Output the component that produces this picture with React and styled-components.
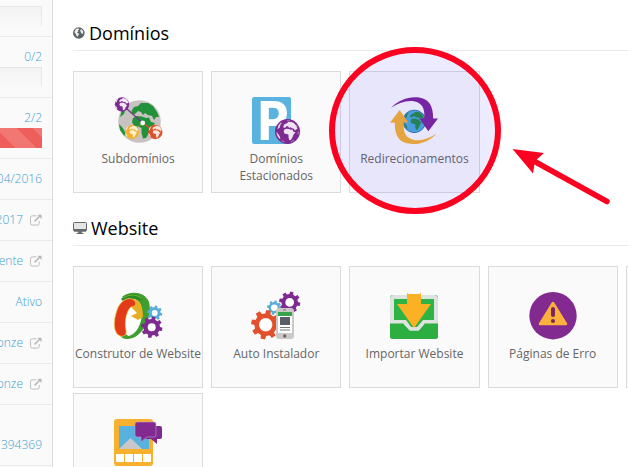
import React from "react";
import styled, { createGlobalStyle, css } from "styled-components";

const GlobalStyle = createGlobalStyle`
  *, *::before, *::after { box-sizing: border-box; }
  body {
    margin: 0;
    background: #fff;
    font-family: "Open Sans", "Noto Sans", sans-serif;
    font-size: 12px;
    line-height: 20px;
    overflow: hidden;
  }
  svg { flex: none; }
`;

const Page = styled.div`
  display: flex;
  height: 100vh;
  overflow: hidden;
`;

const Sidebar = styled.aside`
  flex: none;
  width: 53px;
  background: #fafafa;
  border-right: 1px solid #dcdcdc;
`;

const StatList = styled.ul`
  list-style: none;
  margin: 0;
  padding: 0;
`;

const StatRow = styled.li`
  padding: ${(p) => (p.$first ? "6px" : p.$tall ? "30px" : "10px")} 10px 10px 0;
  border-bottom: 1px solid #eaeaea;
`;

const lineStyle = css`
  display: flex;
  align-items: center;
  justify-content: flex-end;
  gap: 7px;
  height: 20px;
  color: #3f9fd2;
  font-weight: 300;
  white-space: nowrap;
  text-decoration: none;
`;

const StatValue = styled.span`${lineStyle}`;
const StatLink = styled.a`${lineStyle}`;

const Progress = styled.div`
  height: 20px;
  background: linear-gradient(#f3f3f3, #f9f9f9);
  box-shadow: inset -1px 1px 1px rgba(0, 0, 0, 0.06);
`;

const ProgressFill = styled.div`
  height: 100%;
  background: #ee5f5b repeating-linear-gradient(
    45deg,
    transparent 0 11px,
    rgba(255, 255, 255, 0.15) 11px 26px
  );
`;

const Main = styled.main`
  flex: 1 0 auto;
  padding: 21px 20px 0;
`;

const Section = styled.section`
  margin-bottom: 23px;
`;

const Heading = styled.h2`
  display: flex;
  align-items: center;
  gap: 4px;
  margin: 0 0 20px;
  padding-bottom: 5px;
  border-bottom: 1px solid #eaeaea;
  color: #000;
  font-size: 18px;
  font-weight: 400;
  line-height: 24px;
`;

const Grid = styled.div`
  display: grid;
  grid-template-columns: repeat(5, 1fr);
  gap: 5px 8px;
  min-width: 683px;
`;

const Card = styled.a`
  position: relative;
  display: flex;
  flex-direction: column;
  align-items: center;
  gap: 5px;
  min-height: 122px;
  padding-top: 25px;
  background: #fafafa;
  border: 1px solid #dbdbdb;
  color: #666;
  text-decoration: none;
`;

const CardLabel = styled.span`
  max-width: 128px;
  line-height: 17px;
  text-align: center;
`;

const Highlight = styled.svg`
  position: absolute;
  z-index: 1;
  left: -22px;
  top: -26px;
  overflow: visible;
  pointer-events: none;
`;

const IconFrame = styled.svg`
  overflow: visible;
`;

const AppIcon = ({ children }) => (
  <IconFrame width="48" height="48" viewBox="0 0 48 48" aria-hidden="true">{children}</IconFrame>
);

const LAND =
  "M17.5 14 L20 10 L24 9 L27 6 L34 6 L39 9 L43 15 L45 20 L42 20 L40 23 L38 19 L34 18 L31 16 L29 18 L27 15 L24 14 L21 17 L18 17Z" +
  "M19 21 L23 19 L28 19.5 L32 21 L35 20.5 L37 25 L41 26 L37 31 L35 36 L32 41 L29 41.5 L27.5 36 L27.5 31 L24 29.5 L20 29 L18 25Z" +
  "M5 27 L8 30 L10 33 L12 38 L10 38.5 L6 33Z" +
  "M8 13 L12 8 L15 7 L12 11 L10 17 L6 20Z";

const Globe = ({ cx, cy, r, sea, land }) => (
  <g transform={`translate(${cx} ${cy}) scale(${r / 21.3}) translate(-25.5 -24.5)`}>
    <circle cx="25.5" cy="24.5" r="21.3" fill={sea} />
    <path d={LAND} fill={land} />
  </g>
);

const gearPath = (cx, cy, r, hole, teeth, turn) => {
  const root = r * 0.77;
  const step = (Math.PI * 2) / teeth;
  const pts = [];
  for (let i = 0; i < teeth; i++) {
    const a = i * step + turn;
    [[-0.3, root], [-0.2, r], [0.2, r], [0.3, root]].forEach(([f, d]) => {
      pts.push(`${(cx + Math.cos(a + f * step) * d).toFixed(2)} ${(cy + Math.sin(a + f * step) * d).toFixed(2)}`);
    });
  }
  return `M${pts.join("L")}Z M${cx - hole} ${cy}a${hole} ${hole} 0 1 0 ${hole * 2} 0a${hole} ${hole} 0 1 0 ${-hole * 2} 0Z`;
};

const Gear = ({ cx, cy, r, hole, fill, teeth = 8, turn = 0.2 }) => (
  <>
    <circle cx={cx} cy={cy} r={hole + 0.5} fill="#fff" />
    <path d={gearPath(cx, cy, r, hole, teeth, turn)} fill={fill} fillRule="evenodd" />
  </>
);

const SubdomainsIcon = () => (
  <AppIcon>
    <Globe cx={25.5} cy={24.5} r={21.3} sea="#c8c3c1" land="#22923a" />
    <path d="M8 7.5L28.7 26" stroke="#6b3a80" strokeWidth="1.3" />
    <path d="M28.7 26L41 35" stroke="#d8502f" strokeWidth="1.3" />
    <path d="M28.7 26L18 35" stroke="#8b9a35" strokeWidth="1" />
    <Globe cx={8} cy={7.5} r={7.2} sea="#7d2b90" land="#f3e6f5" />
    <Globe cx={18} cy={35} r={7} sea="#f5ae2d" land="#fff0cd" />
    <Globe cx={41.3} cy={35} r={7.2} sea="#df4f2c" land="#ffe3d8" />
    <circle cx="28.7" cy="26" r="2.4" fill="#f4fff4" />
  </AppIcon>
);

const ParkedIcon = () => (
  <AppIcon>
    <rect width="39" height="47" rx="2" fill="#5ab3df" />
    <text x="4" y="43" fontFamily="Open Sans, sans-serif" fontSize="53" fontWeight="700" fill="#fff">P</text>
    <circle cx="35.5" cy="34.5" r="12.5" fill="#7f2a91" />
    <Globe cx={35.5} cy={34.5} r={11} sea="#7f2a91" land="#eee3f0" />
    <circle cx="35.5" cy="34.5" r="10.8" fill="none" stroke="#c9a5d1" strokeWidth=".8" strokeDasharray="3 7" />
  </AppIcon>
);

const SWOOSH =
  "M.8 11C8 3.500 17 0 25 .2C37 .5 43.200 6 43.200 21.400L48 21.400L38.300 34.200L29.600 21.800L34.300 21.600C35 11 32 6 24 4.300C16 3 8 6.500 .8 11Z";

const RedirectIcon = () => (
  <AppIcon>
    <circle cx="24.300" cy="24.300" r="11.600" fill="#2b7194" />
    <Globe cx={24.3} cy={24.3} r={10.8} sea="#4aa9dd" land="#218b45" />
    <path d={SWOOSH} fill="#7c2499" />
    <path d={SWOOSH} fill="#f5b12c" transform="rotate(180 24 23.600)" />
  </AppIcon>
);

const BuilderIcon = () => (
  <AppIcon>
    <path d="M8 5C17 -2 31 0 35 10C39 24 29 46 14 47C9 47 8 46 7 44L18 41C25 31 28 20 24 9Z" fill="#3f9f2e" />
    <path d="M7 7C13 0 24 0 28 7L25 9C21 5 15 5 9 9Z" fill="#2d8b25" />
    <path d="M9 6C15 2 22 2 27 6" fill="none" stroke="#7fc43c" strokeWidth=".8" />
    <path d="M19 7C24 7 28 12 28 20C28 32 22 43 14 44C9 40 11 12 19 7Z" fill="#fff" />
    <path d="M19 7C25 7 29 13 29 25L24 28L17 24L23 21L18 16Z" fill="#e8af25" />
    <path d="M3 18C6 9 15 3 21 9C23 12 21 15 17 15C13 18 10 29 12 38C13 43 10 45 6 44C-1 41 -1 29 3 18Z" fill="#e33a19" stroke="#e8d548" strokeWidth=".7" />
    <Gear cx={40.700} cy={21} r={7.600} hole={2.900} fill="#59addb" />
    <Gear cx={37.700} cy={35.300} r={10.800} hole={4} fill="#7e2a91" />
  </AppIcon>
);

const InstallerIcon = () => (
  <AppIcon>
    <Gear cx={37.700} cy={10.300} r={10.700} hole={4.400} fill="#7e2a91" />
    <Gear cx={22.300} cy={15.700} r={7.300} hole={3.300} fill="#59addb" />
    <Gear cx={13.700} cy={32.700} r={14.700} hole={6.700} fill="#e3502c" />
    <rect x="24" y="16" width="18" height="31" rx="3" fill="#cbc8c5" />
    <rect x="31" y="17.300" width="3" height="1.300" fill="#888" />
    <rect x="26" y="20" width="14" height="21" fill="#fff" />
    <rect x="26" y="20" width="14" height="4" fill="#38a34a" />
    <rect x="28" y="25" width="10" height="8" fill="#5c5b68" />
    <path d="M28 35.500H38M28 38H38" stroke="#777" strokeWidth="1" />
    <circle cx="32.700" cy="44" r="1.700" fill="#666" />
  </AppIcon>
);

const ImportIcon = () => (
  <AppIcon>
    <rect y="3" width="48" height="44" rx="3" fill="#2fb344" />
    <path d="M2 30V7Q2 5 4 5H44Q46 5 46 7V30H34L28 37H20L15 30Z" fill="#2fb344" stroke="#dde3df" strokeWidth="4" />
    <path d="M0 31.500H14L20 38.500H28.500L34 31.500H48V44Q48 47 45 47H3Q0 47 0 44Z" fill="#2cae40" />
    <path d="M14 31L20 37.500H28.500L34 31" fill="none" stroke="#dde3df" strokeWidth="2" />
    <path d="M17 1L19 2H29L31 1V12H41L24 36L7 12H17Z" fill="#fcb023" />
  </AppIcon>
);

const ErrorIcon = () => (
  <AppIcon>
    <circle cx="24" cy="23.700" r="23.700" fill="#832a91" />
    <path d="M24 11L37 32H11Z" fill="#fcb13c" stroke="#fcb13c" strokeWidth="2.500" strokeLinejoin="round" />
    <rect x="22" y="15" width="4" height="10" rx="2" fill="#7b2859" />
    <circle cx="24" cy="29" r="2.100" fill="#7b2859" />
  </AppIcon>
);

const GalleryIcon = () => (
  <AppIcon>
    <rect width="39" height="47" rx="3" fill="#f8b12f" />
    <rect x="5" y="7" width="30" height="23" fill="#58b2e0" />
    <path d="M5 30L16.500 19L28 30Z" fill="#c9c8c8" />
    <path d="M2 35h8v8H2zM11 35h8v8h-8zM20 35h8v8h-8zM29 35h8v8h-8z" fill="#fff" />
    <path d="M32 7H46Q48 7 48 9V18Q48 20 46 20H43V25L37 20H32Z" fill="#7e2a91" />
    <path d="M23 3H40Q42 3 42 5V16Q42 18 40 18H33L27 23V18H23Q21 18 21 16V5Q21 3 23 3Z" fill="#832a91" stroke="#c79bcf" strokeWidth=".6" />
  </AppIcon>
);

const WorldIcon = () => (
  <svg width="12" height="12" viewBox="0 0 12 12" aria-hidden="true">
    <circle cx="5.800" cy="6" r="5.800" fill="#5d6265" />
    <path d="M1.500 4.500L3 2L5.200 1.200L6.300 2.400L5 3.600L5.400 4.600L4 5.400L5.800 6.400L5.800 8L4.800 8.800L4.600 10L3.300 8.600L2.800 6.800L1.700 6Z M7.800 2.200L9 2.600L10.200 4.600L10 6.600L9 7L7.900 5.400L7.200 3.800Z" fill="#e9ebeb" />
  </svg>
);

const MonitorIcon = () => (
  <svg width="14" height="12" viewBox="0 0 14 12" aria-hidden="true">
    <rect x=".5" y=".5" width="13" height="8.500" rx=".8" fill="#e3e4e4" stroke="#66696b" />
    <path d="M1 7H13V9.500H1ZM5.500 9H8.500L9 11H10.500V12H3.500V11H5Z" fill="#66696b" />
  </svg>
);

const ExternalIcon = () => (
  <svg width="12" height="12" viewBox="0 0 13 12" fill="none" stroke="#b7b7b7" aria-hidden="true">
    <path d="M7 1.500H2.500Q.5 1.500 .5 3.500V9.500Q.5 11.500 2.500 11.500H8Q10 11.500 10 9.500V7" />
    <path d="M5 7.500L11 1.500" strokeWidth="1.600" />
    <path d="M8 .3H12.500V4.800Z" fill="#b7b7b7" stroke="none" />
  </svg>
);

const Callout = () => (
  <Highlight width="280" height="168" viewBox="0 0 280 168" aria-hidden="true">
    <ellipse cx="87" cy="84.500" rx="83" ry="80.500" fill="rgba(80, 60, 255, 0.1)" stroke="#fb0220" strokeWidth="6" />
    <path d="M204 114L279 155.500" stroke="#fb0220" strokeWidth="5.500" strokeLinecap="round" />
    <path d="M184.500 103L216 107L207 115L205 127.500Z" fill="#fb0220" />
  </Highlight>
);

const stats = [
  { first: true, used: 0, name: "Recurso" },
  { value: "0/2", used: 0 },
  { value: "2/2", used: 100 },
  { value: "04/2016" },
  { value: "2017", link: true },
  { value: "ente", link: true },
  { value: "Ativo" },
  { value: "onze", link: true },
  { value: "onze", link: true },
  { value: "394369", tall: true },
];

const sections = [
  {
    title: "Domínios",
    icon: WorldIcon,
    items: [
      { label: "Subdomínios", icon: SubdomainsIcon },
      { label: "Domínios Estacionados", icon: ParkedIcon },
      { label: "Redirecionamentos", icon: RedirectIcon, marked: true },
    ],
  },
  {
    title: "Website",
    icon: MonitorIcon,
    items: [
      { label: "Construtor de Website", icon: BuilderIcon },
      { label: "Auto Instalador", icon: InstallerIcon },
      { label: "Importar Website", icon: ImportIcon },
      { label: "Páginas de Erro", icon: ErrorIcon },
      {},
      { icon: GalleryIcon },
    ],
  },
];

export default function App() {
  return (
    <Page>
      <GlobalStyle />
      <Sidebar>
        <StatList>
          {stats.map((s, i) => (
            <StatRow key={i} $first={s.first} $tall={s.tall}>
              {s.value && (s.link
                ? <StatLink href="#">{s.value}<ExternalIcon /></StatLink>
                : <StatValue>{s.value}</StatValue>)}
              {s.used !== undefined && (
                <Progress role="progressbar" aria-valuenow={s.used} aria-label={s.value || s.name}>
                  {s.used > 0 && <ProgressFill style={{ width: `${s.used}%` }} />}
                </Progress>
              )}
            </StatRow>
          ))}
        </StatList>
      </Sidebar>
      <Main>
        {sections.map(({ title, icon: Icon, items }) => (
          <Section key={title}>
            <Heading><Icon />{title}</Heading>
            <Grid>
              {items.map(({ label, icon: ItemIcon, marked }, i) => (
                <Card key={i} href="#">
                  {ItemIcon && <ItemIcon />}
                  {label && <CardLabel>{label}</CardLabel>}
                  {marked && <Callout />}
                </Card>
              ))}
            </Grid>
          </Section>
        ))}
      </Main>
    </Page>
  );
}
